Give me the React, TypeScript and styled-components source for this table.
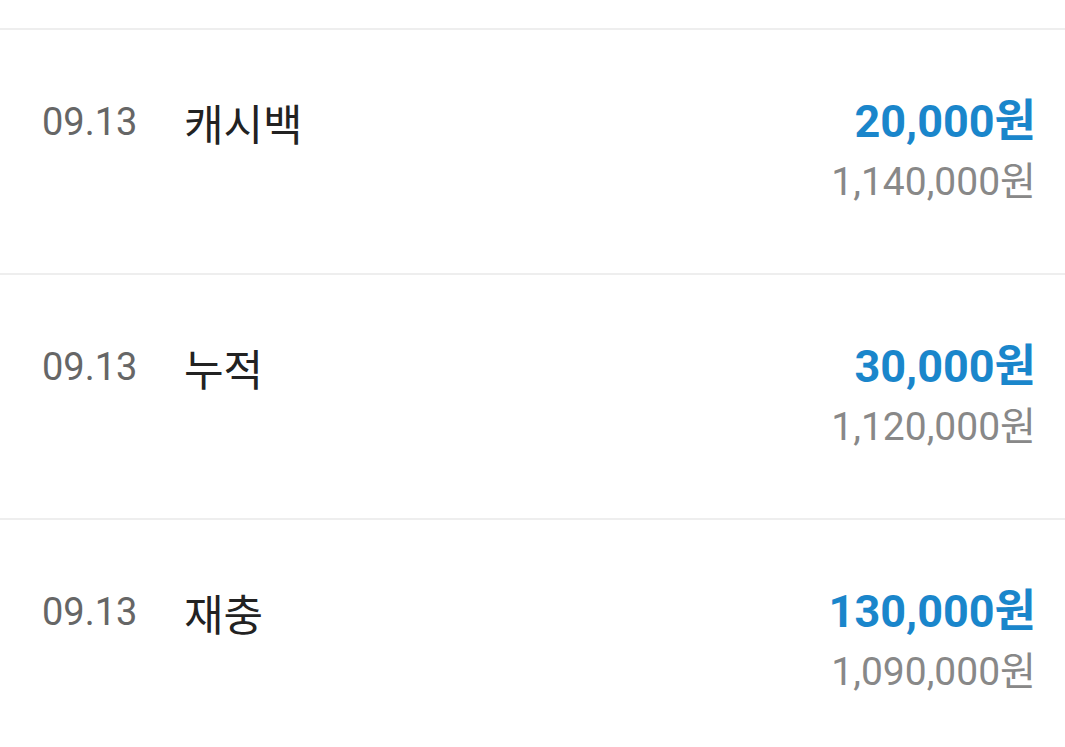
import React from "react";
import styled, { createGlobalStyle } from "styled-components";

const Global = createGlobalStyle`
  html, body { margin: 0; padding: 0; background: #ffffff; }
  body { font-family: Roboto, "Noto Sans CJK KR", sans-serif; }
`;

const Page = styled.div`
  width: 1065px;
  height: 747px;
  overflow: hidden;
  background: #ffffff;
  padding-top: 28px;
  box-sizing: border-box;
`;

const Row = styled.div`
  display: flex;
  justify-content: space-between;
  align-items: flex-start;
  border-top: 2px solid #eeeeee;
  padding: 62px 29px 61px 42px;
`;

const Left = styled.div`
  display: flex;
  align-items: center;
  height: 60px;
`;

const DateText = styled.span`
  width: 142px;
  font-family: Roboto, sans-serif;
  font-size: 38px;
  color: #666666;
  line-height: 60px;
`;

const Title = styled.span`
  font-family: "Noto Sans CJK KR", sans-serif;
  font-size: 43px;
  color: #222222;
  line-height: 60px;
`;

const Right = styled.div`
  display: flex;
  flex-direction: column;
  align-items: flex-end;
`;

const Amount = styled.span`
  font-family: Roboto, "Noto Sans CJK KR", sans-serif;
  font-weight: 700;
  font-size: 45px;
  color: #1a86cb;
  line-height: 60px;
`;

const Balance = styled.span`
  font-family: Roboto, "Noto Sans CJK KR", sans-serif;
  font-size: 39px;
  color: #888888;
  line-height: 60px;
`;

const items = [
  { date: "09.13", title: "캐시백", amount: "20,000원", balance: "1,140,000원" },
  { date: "09.13", title: "누적", amount: "30,000원", balance: "1,120,000원" },
  { date: "09.13", title: "재충", amount: "130,000원", balance: "1,090,000원" },
];

export default function App() {
  return (
    <>
      <Global />
      <Page>
        {items.map((it, i) => (
          <Row key={i}>
            <Left>
              <DateText>{it.date}</DateText>
              <Title>{it.title}</Title>
            </Left>
            <Right>
              <Amount>{it.amount}</Amount>
              <Balance>{it.balance}</Balance>
            </Right>
          </Row>
        ))}
      </Page>
    </>
  );
}
